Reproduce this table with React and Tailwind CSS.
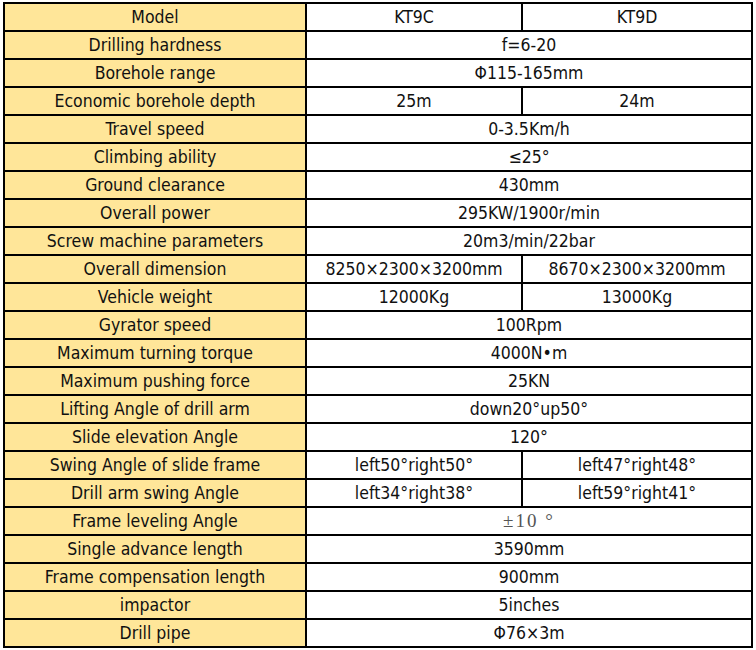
const rows = [
  { label: 'Model', a: 'KT9C', b: 'KT9D' },
  { label: 'Drilling hardness', v: 'f=6-20' },
  { label: 'Borehole range', v: 'Φ115-165mm' },
  { label: 'Economic borehole depth', a: '25m', b: '24m' },
  { label: 'Travel speed', v: '0-3.5Km/h' },
  { label: 'Climbing ability', v: '≤25°' },
  { label: 'Ground clearance', v: '430mm' },
  { label: 'Overall power', v: '295KW/1900r/min' },
  { label: 'Screw machine parameters', v: '20m3/min/22bar' },
  { label: 'Overall dimension', a: '8250×2300×3200mm', b: '8670×2300×3200mm' },
  { label: 'Vehicle weight', a: '12000Kg', b: '13000Kg' },
  { label: 'Gyrator speed', v: '100Rpm' },
  { label: 'Maximum turning torque', v: '4000N•m' },
  { label: 'Maximum pushing force', v: '25KN' },
  { label: 'Lifting Angle of drill arm', v: 'down20°up50°' },
  { label: 'Slide elevation Angle', v: '120°' },
  { label: 'Swing Angle of slide frame', a: 'left50°right50°', b: 'left47°right48°' },
  { label: 'Drill arm swing Angle', a: 'left34°right38°', b: 'left59°right41°' },
  { label: 'Frame leveling Angle', v: '±10 °', serif: true },
  { label: 'Single advance length', v: '3590mm' },
  { label: 'Frame compensation length', v: '900mm' },
  { label: 'impactor', v: '5inches' },
  { label: 'Drill pipe', v: 'Φ76×3m' },
];

const cell = 'h-[26px] flex items-center justify-center whitespace-nowrap';

export default function App() {
  return (
    <div className="w-[756px] h-[650px] bg-white pt-[2px] pl-[3px] text-[17.5px] text-[#111]" style={{ fontFamily: '"DejaVu Sans Condensed", "DejaVu Sans", sans-serif' }}>
      <div className="grid grid-cols-[300px_214px_228px] gap-[2px] p-[2px] bg-black w-[750px]">
        {rows.map((r) => (
          <div key={r.label} className="contents">
            <div className={`${cell} bg-[#ffe699]`}>{r.label}</div>
            {r.v !== undefined ? (
              <div
                className={`${cell} col-span-2 bg-white ${r.serif ? 'text-[#555] text-[19px] tracking-[2px]' : ''}`}
                style={r.serif ? { fontFamily: '"Liberation Serif", serif' } : undefined}
              >
                {r.v}
              </div>
            ) : (
              <>
                <div className={`${cell} bg-white`}>{r.a}</div>
                <div className={`${cell} bg-white`}>{r.b}</div>
              </>
            )}
          </div>
        ))}
      </div>
    </div>
  );
}
